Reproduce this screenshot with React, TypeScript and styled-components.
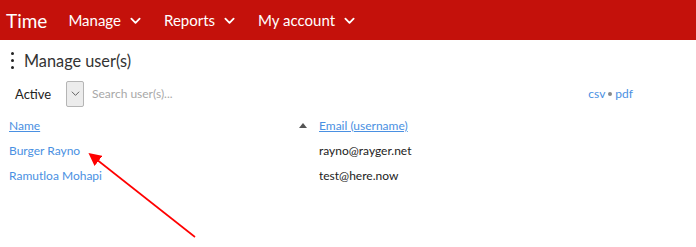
import React from 'react'
import styled, { createGlobalStyle } from 'styled-components'

const GlobalStyle = createGlobalStyle`
  body {
    margin: 0;
    font-family: Lato, "Open Sans", sans-serif;
    background: #fff;
    color: #222;
  }
`

const Page = styled.div`
  position: relative;
  width: 696px;
  height: 247px;
  overflow: hidden;
`

const TopBar = styled.nav`
  display: flex;
  align-items: center;
  height: 40px;
  background: #c4110b;
  color: #fff;
  padding-left: 6px;
`

const Brand = styled.div`
  font-size: 19px;
  margin-right: 21px;
`

const NavItem = styled.div`
  display: flex;
  align-items: center;
  gap: 9px;
  font-size: 15px;
  margin-right: 23px;
`

const Chevron = ({ size = 11, stroke = '#fff', width = 2 }) => (
  <svg width={size} height={size} viewBox="0 0 12 12">
    <path d="M1.5 4 L6 8.5 L10.5 4" fill="none" stroke={stroke} strokeWidth={width} strokeLinecap="round" strokeLinejoin="round" />
  </svg>
)

const TitleRow = styled.div`
  display: flex;
  align-items: center;
  height: 38px;
  padding: 1px 0 0 11px;
  gap: 10px;
`

const Dots = styled.div`
  display: flex;
  flex-direction: column;
  gap: 4px;
  span {
    width: 3px;
    height: 3px;
    border-radius: 50%;
    background: #222;
  }
`

const Title = styled.h1`
  margin: 0;
  font-size: 16.3px;
  font-weight: normal;
  color: #333;
`

const FilterRow = styled.div`
  display: flex;
  align-items: center;
  height: 27px;
  padding: 1px 0 0 15px;
`

const StatusLabel = styled.span`
  font-size: 13px;
  width: 51px;
`

const SelectBox = styled.div`
  display: flex;
  align-items: center;
  justify-content: center;
  width: 16px;
  height: 24px;
  border: 1px solid #b5b5b5;
  background: #ececec;
  border-radius: 2px;
`

const Search = styled.input`
  border: none;
  outline: none;
  margin-left: 6px;
  font-family: inherit;
  font-size: 12px;
  width: 300px;
  color: #333;
  &::placeholder {
    color: #a8a8a8;
  }
`

const Exports = styled.div`
  margin-left: auto;
  margin-right: 63px;
  font-size: 12px;
  display: flex;
  align-items: center;
  gap: 3px;
`

const Link = styled.a<{ underline?: boolean }>`
  color: #4a90e2;
  text-decoration: ${p => (p.underline ? 'underline' : 'none')};
`

const Bullet = styled.span`
  width: 4px;
  height: 4px;
  border-radius: 50%;
  background: #888;
`

const Table = styled.div`
  display: grid;
  grid-template-columns: 287px 23px 1fr;
  grid-auto-rows: 25px;
  align-items: center;
  padding: 6px 0 0 9px;
  font-size: 12px;
`

const SortArrow = styled.span`
  width: 0;
  height: 0;
  border-left: 4px solid transparent;
  border-right: 4px solid transparent;
  border-bottom: 5px solid #555;
  margin-left: 3px;
`

const Email = styled.span`
  color: #222;
`

const Annotation = styled.svg`
  position: absolute;
  left: 0;
  top: 0;
  pointer-events: none;
`

const users = [
  { name: 'Burger Rayno', email: 'rayno@rayger.net' },
  { name: 'Ramutloa Mohapi', email: 'test@here.now' },
]

export default function App() {
  return (
    <Page>
      <GlobalStyle />
      <TopBar>
        <Brand>Time</Brand>
        {['Manage', 'Reports', 'My account'].map(item => (
          <NavItem key={item}>
            {item}
            <Chevron />
          </NavItem>
        ))}
      </TopBar>
      <TitleRow>
        <Dots>
          <span />
          <span />
          <span />
        </Dots>
        <Title>Manage user(s)</Title>
      </TitleRow>
      <FilterRow>
        <StatusLabel>Active</StatusLabel>
        <SelectBox>
          <Chevron size={9} stroke="#555" width={1.2} />
        </SelectBox>
        <Search placeholder="Search user(s)..." />
        <Exports>
          <Link href="#">csv</Link>
          <Bullet />
          <Link href="#">pdf</Link>
        </Exports>
      </FilterRow>
      <Table>
        <Link href="#" underline>Name</Link>
        <SortArrow />
        <Link href="#" underline>Email (username)</Link>
        {users.map(u => (
          <React.Fragment key={u.email}>
            <Link href="#">{u.name}</Link>
            <span />
            <Email>{u.email}</Email>
          </React.Fragment>
        ))}
      </Table>
      <Annotation width="696" height="247">
        <defs>
          <marker id="head" markerWidth="8" markerHeight="8" refX="2" refY="4" orient="auto">
            <path d="M0 0 L8 4 L0 8 Z" fill="#f00" />
          </marker>
        </defs>
        <line x1="195" y1="237" x2="96" y2="159" stroke="#f00" strokeWidth="1.6" markerEnd="url(#head)" />
      </Annotation>
    </Page>
  )
}
